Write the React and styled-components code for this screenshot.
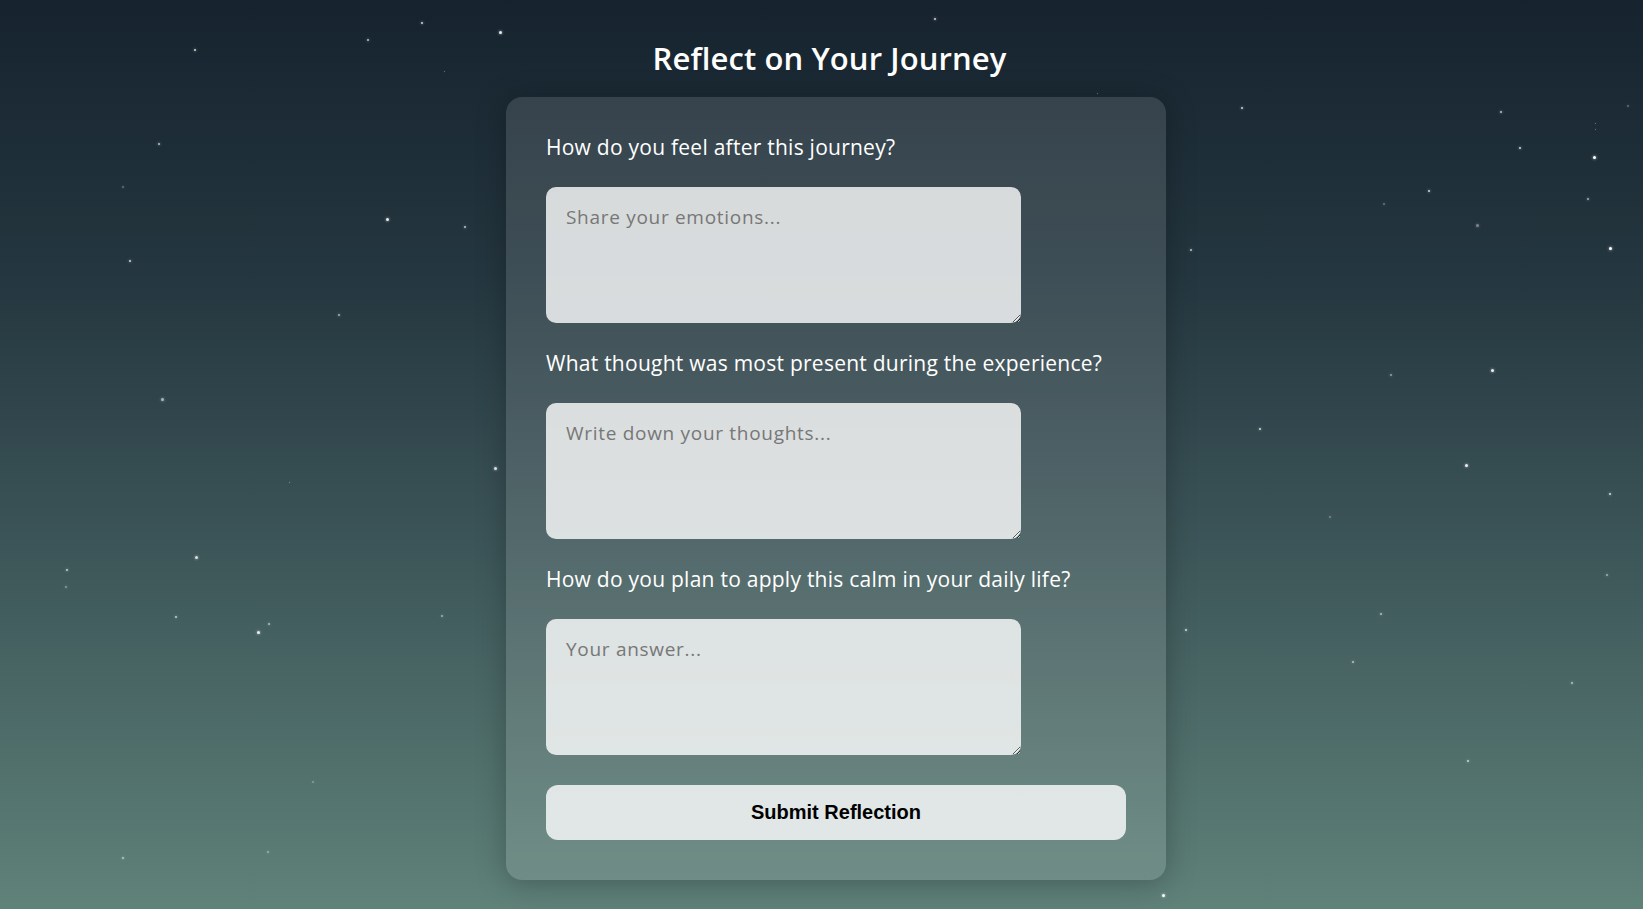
import React from 'react';
import styled, { createGlobalStyle } from 'styled-components';

const GlobalStyle = createGlobalStyle`
  html, body {
    margin: 0;
    padding: 0;
  }
  body {
    font-family: 'Open Sans', 'Noto Sans', sans-serif;
    background: #16232e;
  }
`;

const Page = styled.div`
  position: relative;
  min-height: 100vh;
  box-sizing: border-box;
  overflow: hidden;
  display: flex;
  flex-direction: column;
  align-items: center;
  padding: 39px 0 30px 29px;
  background: linear-gradient(to bottom, #16232e 0%, #24363f 30%, #3c5558 60%, #5f8279 100%);
`;

const Star = styled.span`
  position: absolute;
  border-radius: 50%;
  background: #fff;
  box-shadow: 0 0 3px rgba(255, 255, 255, 0.8);
`;

const Title = styled.h1`
  position: relative;
  margin: 0 13px 20px 0;
  font-size: 31px;
  line-height: 38px;
  font-weight: 600;
  color: #fff;
  letter-spacing: 0.1px;
`;

const Card = styled.form`
  position: relative;
  width: 660px;
  box-sizing: border-box;
  padding: 40px;
  display: flex;
  flex-direction: column;
  gap: 30px;
  border-radius: 16px;
  background: rgba(255, 255, 255, 0.12);
  box-shadow: 0 4px 30px rgba(0, 0, 0, 0.25);
`;

const Label = styled.label`
  display: block;
  font-size: 21px;
  line-height: 20px;
  color: #fff;
  letter-spacing: 0.25px;
`;

const Field = styled.textarea`
  display: block;
  width: 475px;
  height: 136px;
  box-sizing: border-box;
  padding: 20px;
  border: none;
  border-radius: 10px;
  background: rgba(255, 255, 255, 0.8);
  font-family: 'Open Sans', 'Noto Sans', sans-serif;
  font-size: 19px;
  line-height: 1.15;
  letter-spacing: 0.7px;
  color: #222;
  outline: none;

  &::placeholder {
    color: #777;
  }
`;

const SubmitButton = styled.button`
  height: 55px;
  border: none;
  border-radius: 12px;
  background: rgba(255, 255, 255, 0.8);
  font-family: 'Liberation Sans', Arial, sans-serif;
  font-size: 20px;
  font-weight: 700;
  color: #000;
  cursor: pointer;
`;

const stars = [
  [421, 22, 2, 0.8], [367, 39, 2, 0.7], [194, 49, 2, 0.8], [444, 71, 1, 0.4], [499, 31, 3, 0.9],
  [158, 143, 2, 0.7], [122, 186, 2, 0.3], [386, 218, 3, 0.9], [464, 226, 2, 0.7], [129, 260, 2, 0.8],
  [934, 18, 2, 0.8], [1241, 107, 2, 0.8], [1500, 111, 2, 0.7], [1627, 105, 2, 0.3], [1595, 123, 1, 0.4],
  [1519, 147, 2, 0.8], [1593, 156, 3, 1], [1428, 190, 2, 0.8], [1383, 203, 2, 0.3], [1587, 198, 2, 0.6],
  [1476, 224, 3, 0.4], [1609, 247, 3, 1], [1190, 249, 2, 0.7], [338, 314, 2, 0.6], [161, 398, 3, 0.6],
  [289, 482, 1, 0.4], [494, 467, 3, 0.9], [66, 569, 2, 0.7], [65, 586, 2, 0.4], [195, 556, 3, 0.8],
  [175, 616, 2, 0.7], [257, 631, 3, 0.9], [268, 623, 2, 0.6], [441, 615, 2, 0.5], [312, 781, 2, 0.3],
  [122, 857, 2, 0.6], [267, 851, 2, 0.4], [1491, 369, 3, 0.9], [1390, 374, 2, 0.5], [1259, 428, 2, 0.8],
  [1465, 464, 3, 0.9], [1609, 493, 2, 0.8], [1329, 516, 2, 0.3], [1606, 574, 2, 0.5], [1185, 629, 2, 0.8],
  [1380, 613, 2, 0.6], [1352, 661, 2, 0.6], [1571, 682, 2, 0.6], [1467, 760, 2, 0.7], [1162, 894, 3, 1],
  [1595, 129, 1, 0.4], [1097, 93, 1, 0.4],
];

const questions = [
  { id: 'feel', label: 'How do you feel after this journey?', placeholder: 'Share your emotions...' },
  { id: 'thought', label: 'What thought was most present during the experience?', placeholder: 'Write down your thoughts...' },
  { id: 'apply', label: 'How do you plan to apply this calm in your daily life?', placeholder: 'Your answer...' },
];

export default function App() {
  return (
    <>
      <GlobalStyle />
      <Page>
        {stars.map(([x, y, s, o], i) => (
          <Star key={i} style={{ left: x, top: y, width: s, height: s, opacity: o }} />
        ))}
        <Title>Reflect on Your Journey</Title>
        <Card onSubmit={e => e.preventDefault()}>
          {questions.map(q => (
            <React.Fragment key={q.id}>
              <Label htmlFor={q.id}>{q.label}</Label>
              <Field id={q.id} placeholder={q.placeholder} />
            </React.Fragment>
          ))}
          <SubmitButton type="submit">Submit Reflection</SubmitButton>
        </Card>
      </Page>
    </>
  );
}
